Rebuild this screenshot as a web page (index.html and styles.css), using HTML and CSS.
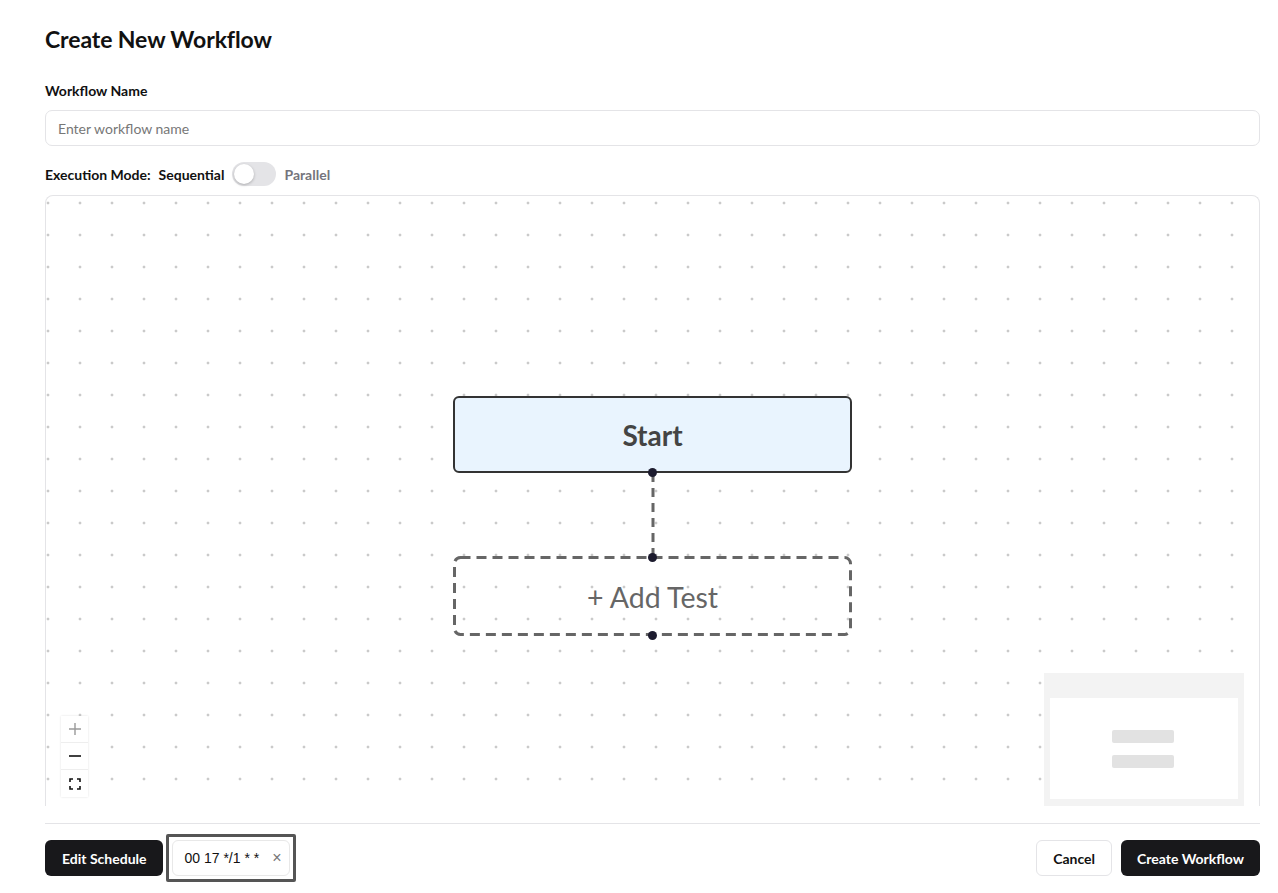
FILE: index.html
```html
<!DOCTYPE html>
<html>
<head>
<meta charset="utf-8">
<link rel="stylesheet" href="styles.css">
</head>
<body>
<div class="page">
  <h1 class="title">Create New Workflow</h1>
  <label class="label">Workflow Name</label>
  <div class="input">Enter workflow name</div>
  <div class="mode-row">
    <span class="mode-label">Execution Mode:</span>
    <span class="mode-opt active">Sequential</span>
    <span class="toggle"><span class="knob"></span></span>
    <span class="mode-opt muted">Parallel</span>
  </div>
  <div class="canvas">
    <div class="node start-node">Start</div>
    <svg class="edge" width="12" height="90" viewBox="0 0 12 90">
      <line x1="6" y1="4" x2="6" y2="86" stroke="#666" stroke-width="3" stroke-dasharray="9 6"/>
    </svg>
    <div class="node add-node">
      <svg class="dash-border" width="399" height="80" viewBox="0 0 399 80">
        <rect x="1.5" y="1.5" width="396" height="77" rx="6" ry="6" fill="none" stroke="#666" stroke-width="3" stroke-dasharray="10 6"/>
      </svg>
      <span class="add-text">+ Add Test</span>
    </div>
    <span class="handle h1"></span>
    <span class="handle h2"></span>
    <span class="handle h3"></span>
    <div class="controls">
      <div class="ctl">
        <svg width="14" height="14" viewBox="0 0 14 14"><path d="M7 1v12M1 7h12" stroke="#9a9a9a" stroke-width="1.4"/></svg>
      </div>
      <div class="ctl">
        <svg width="14" height="14" viewBox="0 0 14 14"><path d="M1 7h12" stroke="#111" stroke-width="1.6"/></svg>
      </div>
      <div class="ctl">
        <svg width="12" height="12" viewBox="0 0 12 12" fill="none" stroke="#111" stroke-width="1.6"><path d="M1 4V1h3M8 1h3v3M11 8v3H8M4 11H1V8"/></svg>
      </div>
    </div>
    <div class="minimap">
      <div class="mini-view">
        <span class="mini-bar"></span>
        <span class="mini-bar"></span>
      </div>
    </div>
  </div>
  <div class="footer">
    <div class="footer-left">
      <button class="btn dark wide">Edit Schedule</button>
      <div class="cron-wrap">
        <div class="cron">
          <span class="cron-text">00 17 */1 * *</span>
          <span class="cron-x">×</span>
        </div>
      </div>
    </div>
    <div class="footer-right">
      <button class="btn light">Cancel</button>
      <button class="btn dark">Create Workflow</button>
    </div>
  </div>
</div>
</body>
</html>
```

FILE: styles.css
```css
* { box-sizing: border-box; }
html, body { margin: 0; padding: 0; background: #fff; }
body {
  font-family: "Lato", "Noto Sans", "Liberation Sans", sans-serif;
  color: #111;
}
.page {
  width: 1278px;
  padding: 26px 18px 0 45px;
  display: flex;
  flex-direction: column;
}
.title {
  margin: 0;
  font-size: 23px;
  font-weight: 700;
  line-height: 27px;
  letter-spacing: -0.1px;
}
.label {
  margin-top: 29px;
  font-size: 14px;
  font-weight: 700;
  line-height: 18px;
}
.input {
  margin-top: 10px;
  height: 36px;
  border: 1px solid #e4e4e7;
  border-radius: 7px;
  padding: 0 12px;
  display: flex;
  align-items: center;
  font-size: 14px;
  color: #777;
}
.mode-row {
  margin-top: 16px;
  height: 24px;
  display: flex;
  align-items: center;
  font-size: 14px;
  font-weight: 700;
}
.mode-label { margin-right: 8px; }
.mode-opt.muted { color: #74747c; }
.toggle {
  width: 44px;
  height: 24px;
  border-radius: 12px;
  background: #e4e4e7;
  margin: 0 8px;
  padding: 2px;
  display: flex;
}
.knob {
  width: 20px;
  height: 20px;
  border-radius: 50%;
  background: #fff;
  box-shadow: 0 1px 3px rgba(0,0,0,0.25);
}
.canvas {
  position: relative;
  margin-top: 9px;
  height: 611px;
  border: 1px solid #e4e4e7;
  border-bottom: none;
  border-radius: 8px 8px 0 0;
  overflow: hidden;
  background-color: #fff;
  background-image: radial-gradient(circle, #cacaca 1.2px, transparent 1.7px);
  background-size: 32px 32px;
  background-position: -14px -9px;
}
.node {
  position: absolute;
  left: 407px;
  width: 399px;
  display: flex;
  align-items: center;
  justify-content: center;
}
.start-node {
  top: 200px;
  height: 77px;
  background: #e9f4fe;
  border: 2px solid #333;
  border-radius: 6px;
  font-size: 28px;
  font-weight: 700;
  color: #444;
}
.edge {
  position: absolute;
  left: 601px;
  top: 273px;
}
.add-node {
  top: 360px;
  height: 80px;
  color: #666;
  font-size: 28.5px;
  padding-top: 2px;
}
.dash-border {
  position: absolute;
  left: 0;
  top: 0;
}
.add-text { position: relative; }
.handle {
  position: absolute;
  width: 9px;
  height: 9px;
  border-radius: 50%;
  background: #1c1b2e;
  left: 602px;
}
.h1 { top: 272px; }
.h2 { top: 357px; }
.h3 { top: 435px; }
.controls {
  position: absolute;
  left: 15px;
  top: 520px;
  width: 27px;
  display: flex;
  flex-direction: column;
  background: #fff;
  box-shadow: 0 0 2px rgba(0,0,0,0.12);
}
.ctl {
  height: 27px;
  display: flex;
  align-items: center;
  justify-content: center;
  border-bottom: 1px solid #eee;
}
.ctl:last-child { border-bottom: none; }
.minimap {
  position: absolute;
  left: 998px;
  top: 477px;
  width: 200px;
  height: 134px;
  background: #f3f3f3;
  padding: 25px 6px 8px 6px;
}
.mini-view {
  background: #fff;
  height: 100%;
  display: flex;
  flex-direction: column;
  align-items: center;
  justify-content: center;
  gap: 12px;
  padding-right: 2px;
}
.mini-bar {
  width: 62px;
  height: 13px;
  background: #e2e2e2;
  border-radius: 2px;
}
.footer {
  margin-top: 17px;
  border-top: 1px solid #e4e4e7;
  padding-top: 10px;
  display: flex;
  justify-content: space-between;
  align-items: center;
}
.footer-left, .footer-right {
  display: flex;
  align-items: center;
}
.footer-right { gap: 9px; }
.btn {
  height: 36px;
  border-radius: 6px;
  padding: 0 16px;
  font-family: inherit;
  font-size: 14px;
  font-weight: 700;
  cursor: pointer;
}
.btn.wide { padding: 0 17px; }
.btn.dark {
  background: #18181b;
  color: #fff;
  border: none;
}
.btn.light {
  background: #fff;
  color: #111;
  border: 1px solid #e4e4e7;
}
.cron-wrap {
  margin-left: 3px;
  border: 3px solid #555;
  border-radius: 2px;
  padding: 3px;
}
.cron {
  height: 36px;
  width: 118px;
  border: 1px solid #e8e8e8;
  border-radius: 6px;
  display: flex;
  align-items: center;
  padding: 0 8px 0 11px;
  font-family: "Liberation Sans", Arial, sans-serif;
  font-size: 14px;
  color: #111;
}
.cron-text { flex: 1; white-space: nowrap; }
.cron-x {
  color: #777;
  font-size: 16px;
}
```
